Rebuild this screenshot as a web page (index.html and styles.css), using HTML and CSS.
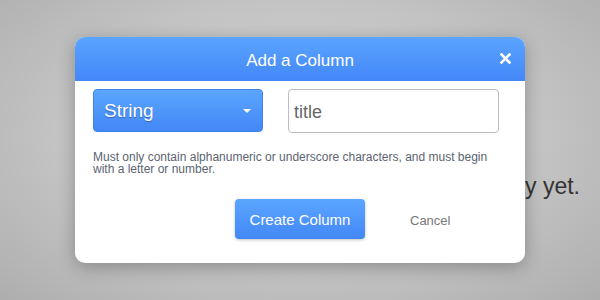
FILE: index.html
```html
<!DOCTYPE html>
<html lang="en">
<head>
    <meta charset="UTF-8">
    <meta name="viewport" content="width=device-width, initial-scale=1.0">
    <title>Add a Column</title>
    <link rel="stylesheet" href="styles.css">
</head>
<body>
    <div class="page">
        <p class="empty">There is no data to display yet.</p>
    </div>

    <!-- Modal: add column -->
    <div class="overlay">
        <div class="modal">
            <div class="modal-header">
                <h2>Add a Column</h2>
                <button class="close" aria-label="Close">
                    <svg width="11" height="11" viewBox="0 0 11 11">
                        <path d="M1.5 1.5 L9.5 9.5 M9.5 1.5 L1.5 9.5" stroke="#fff" stroke-width="2.6" stroke-linecap="square" fill="none"/>
                    </svg>
                </button>
            </div>
            <div class="modal-body">
                <div class="field-row">
                    <div class="type-select">
                        <span>String</span>
                        <span class="caret"></span>
                    </div>
                    <input type="text" class="name-input" value="title">
                </div>
                <p class="hint">Must only contain alphanumeric or underscore characters, and must begin with a letter or number.</p>
                <div class="actions">
                    <button class="primary">Create Column</button>
                    <a href="#" class="cancel">Cancel</a>
                </div>
            </div>
        </div>
    </div>
</body>
</html>
```

FILE: styles.css
```css
html, body {
    height: 100%;
}

body {
    margin: 0;
    font-family: "Liberation Sans", Arial, sans-serif;
    background: radial-gradient(ellipse at 50% 45%, #d8d8d8 0%, #c4c4c4 55%, #aeaeae 100%);
    overflow: hidden;
}

.page {
    padding: 177px 20px 0 0;
}

.empty {
    margin: 0;
    text-align: right;
    font-size: 23px;
    line-height: 18px;
    color: #333;
}

.overlay {
    position: absolute;
    top: 0;
    left: 0;
    width: 100%;
    height: 100%;
    display: flex;
    align-items: center;
    justify-content: center;
}

.modal {
    width: 450px;
    background: white;
    border-radius: 10px;
    box-shadow: 0px 4px 18px rgba(0, 0, 0, 0.28);
    overflow: hidden;
}

.modal-header {
    height: 44px;
    box-sizing: border-box;
    padding-top: 3px;
    display: flex;
    align-items: center;
    justify-content: center;
    position: relative;
    background: linear-gradient(#5ba4ff, #4387f7);
}

.modal-header h2 {
    margin: 0;
    font-size: 17px;
    font-weight: normal;
    color: white;
}

.close {
    position: absolute;
    right: 14px;
    top: 16px;
    padding: 0;
    border: none;
    background: none;
    width: 11px;
    height: 11px;
    cursor: pointer;
}

.close svg {
    display: block;
}

.modal-body {
    padding: 8px 26px 24px 18px;
}

.field-row {
    display: flex;
    gap: 25px;
}

.type-select {
    width: 170px;
    height: 43px;
    box-sizing: border-box;
    display: flex;
    align-items: center;
    justify-content: space-between;
    padding: 0 11px 0 10px;
    border: 1px solid #3f80ea;
    border-radius: 4px;
    background: linear-gradient(#5ba6ff, #4387f6);
    color: white;
    font-size: 19px;
    text-shadow: 0 1px 1px rgba(0, 0, 50, 0.3);
}

.caret {
    width: 0;
    height: 0;
    border-left: 4px solid transparent;
    border-right: 4px solid transparent;
    border-top: 4px solid white;
}

.name-input {
    width: 211px;
    height: 44px;
    box-sizing: border-box;
    margin: 0;
    padding: 2px 5px 0 5px;
    border: 1px solid #bcbcbc;
    border-radius: 4px;
    font-family: "Liberation Sans", Arial, sans-serif;
    font-size: 18px;
    color: #666;
    outline: none;
}

.hint {
    margin: 18px 0 0 0;
    font-size: 12px;
    line-height: 12px;
    color: #5b6470;
}

.actions {
    display: flex;
    align-items: center;
    gap: 45px;
    padding: 24px 0 0 142px;
}

.primary {
    width: 130px;
    height: 40px;
    padding: 0;
    border: none;
    border-radius: 4px;
    background: linear-gradient(#5ba6ff, #4387f6);
    box-shadow: 0px 1px 3px rgba(0, 0, 0, 0.25);
    color: white;
    font-family: "Liberation Sans", Arial, sans-serif;
    font-size: 15px;
    cursor: pointer;
}

.cancel {
    margin-top: 3px;
    font-size: 13px;
    color: #777;
    text-decoration: none;
}
```
